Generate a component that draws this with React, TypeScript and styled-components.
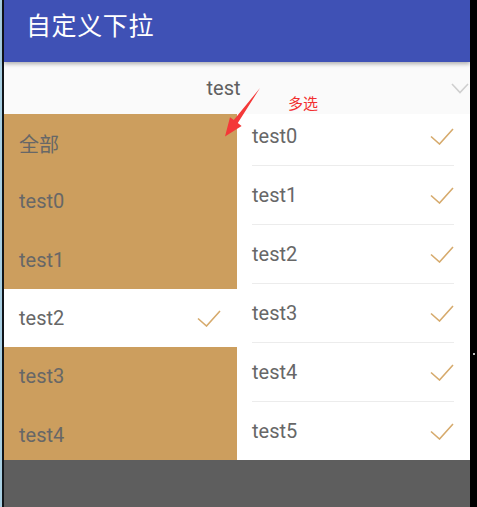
import React from "react";
import styled, { createGlobalStyle } from "styled-components";

const Global = createGlobalStyle`
  html, body { margin: 0; padding: 0; background: #000; }
  body { font-family: Roboto, "Noto Sans CJK SC", sans-serif; }
  * { box-sizing: border-box; }
`;

const Frame = styled.div`
  width: 477px;
  height: 507px;
  padding-left: 4px;
  background: linear-gradient(to right, #a9cfe2 0 2px, #101418 2px 4px, #000 4px);
  position: relative;
  overflow: hidden;
`;

const Screen = styled.div`
  width: 466px;
  height: 507px;
  display: flex;
  flex-direction: column;
  background: #5e5e5e;
`;

const AppBar = styled.div`
  height: 62px;
  flex: none;
  background: #3f51b5;
  padding: 12px 0 0 22px;
  position: relative;
  z-index: 2;
  box-shadow: 0 2px 4px rgba(0, 0, 0, 0.3);
`;

const Title = styled.h1`
  margin: 0;
  font-family: "Noto Sans CJK SC", sans-serif;
  font-weight: 400;
  font-size: 25px;
  line-height: 25px;
  letter-spacing: 0.6px;
  color: #fff;
`;

const Header = styled.div`
  height: 52px;
  flex: none;
  background: #fafafa;
  display: flex;
  align-items: center;
`;

const HeaderLabel = styled.div`
  flex: 1;
  text-align: center;
  font-size: 20px;
  color: #606060;
  padding-left: 1px;
`;

const Chevron = styled.svg`
  width: 18px;
  height: 11px;
  margin-right: 1px;
  margin-left: 9px;
  margin-top: 1px;
`;

const Panels = styled.div`
  height: 346px;
  flex: none;
  display: flex;
`;

const LeftList = styled.div`
  width: 233px;
  background: #cc9e5e;
  overflow: hidden;
`;

const LeftRow = styled.div<{ $selected?: boolean }>`
  height: 58.3px;
  display: flex;
  align-items: center;
  justify-content: space-between;
  padding: 0 16px 0 15px;
  background: ${(p) => (p.$selected ? "#fff" : "transparent")};
  font-size: 20px;
  color: #676767;
`;

const RightList = styled.div`
  flex: 1;
  background: #fff;
  overflow: hidden;
`;

const RightInner = styled.div`
  margin-top: -7px;
`;

const RightRow = styled.div`
  height: 59px;
  padding: 0 16px 0 15px;
`;

const RightRowInner = styled.div`
  height: 100%;
  display: flex;
  align-items: center;
  justify-content: space-between;
  border-bottom: 1px solid #ececec;
  font-size: 20px;
  color: #676767;
`;

const Check = styled.svg`
  width: 24px;
  height: 17px;
  flex: none;
`;

const Annotation = styled.svg`
  position: absolute;
  left: 0;
  top: 0;
  width: 477px;
  height: 507px;
  pointer-events: none;
  z-index: 5;
`;

const Note = styled.div`
  position: absolute;
  left: 288px;
  top: 94px;
  font-family: "Noto Sans CJK SC", sans-serif;
  font-size: 15px;
  line-height: 18px;
  color: #f22f2f;
  z-index: 6;
`;

const CheckIcon = () => (
  <Check viewBox="0 0 24 17">
    <polyline
      points="1,8.5 9.5,16 23,1"
      fill="none"
      stroke="#d6aa6c"
      strokeWidth="1.6"
    />
  </Check>
);

const leftItems = ["全部", "test0", "test1", "test2", "test3", "test4"];
const rightItems = ["test0", "test1", "test2", "test3", "test4", "test5"];

export default function App() {
  return (
    <>
      <Global />
      <Frame>
        <Screen>
          <AppBar>
            <Title>自定义下拉</Title>
          </AppBar>
          <Header>
            <HeaderLabel>test</HeaderLabel>
            <Chevron viewBox="0 0 18 11">
              <polyline
                points="1,1 9,9.5 17,1"
                fill="none"
                stroke="#cfcfcf"
                strokeWidth="1.6"
              />
            </Chevron>
          </Header>
          <Panels>
            <LeftList>
              {leftItems.map((t) => (
                <LeftRow key={t} $selected={t === "test2"}>
                  <span>{t}</span>
                  {t === "test2" && <CheckIcon />}
                </LeftRow>
              ))}
            </LeftList>
            <RightList>
              <RightInner>
                {rightItems.map((t) => (
                  <RightRow key={t}>
                    <RightRowInner>
                      <span>{t}</span>
                      <CheckIcon />
                    </RightRowInner>
                  </RightRow>
                ))}
              </RightInner>
            </RightList>
          </Panels>
        </Screen>
        <Annotation viewBox="0 0 477 507">
          <polygon
            points="260,88 237.8,123.1 241.6,126 225,136.5 230,117.2 233.8,120.1"
            fill="#f43838"
          />
          <rect x="473" y="353" width="2" height="2" fill="#bbb" />
        </Annotation>
        <Note>多选</Note>
      </Frame>
    </>
  );
}
